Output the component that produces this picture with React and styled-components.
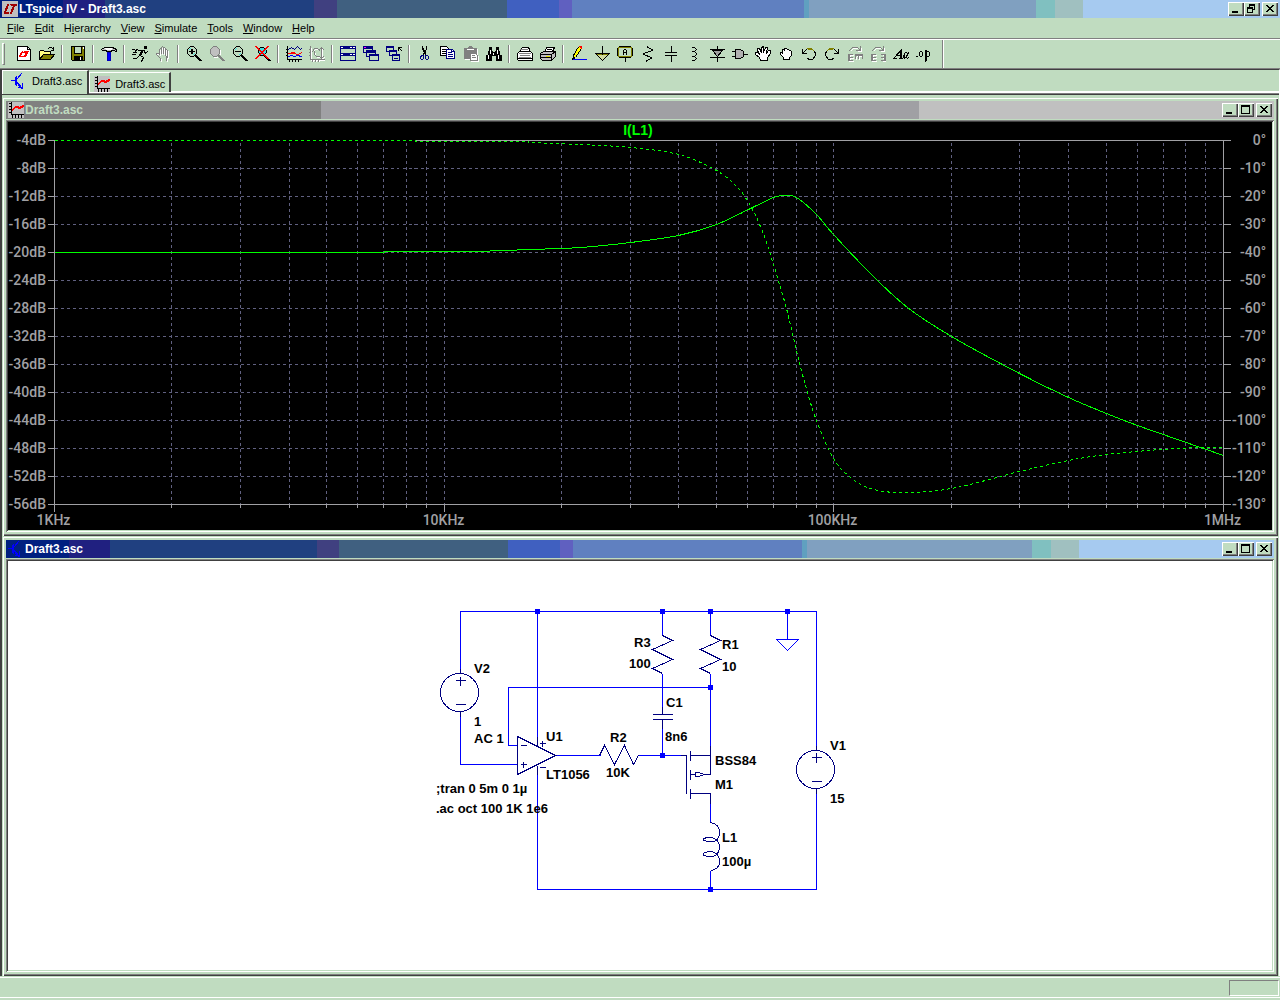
import React from "react";
import styled, { createGlobalStyle } from "styled-components";

const Face = "#c0dcc0";
const Light = "#ffffff";
const Shadow = "#808080";
const Dark = "#404040";
const Navy = "#000080";
const Wire = "#0000ff";
const AxisColor = "#a0a0a4";
const GridColor = "#606080";
const TraceColor = "#00ff00";

const ActiveCaption = `linear-gradient(to right,
  #002080 4.95%, #202080 4.95% 8.24%, #204080 8.24% 24.5%, #404080 24.5% 26.3%,
  #406080 26.3% 39.6%, #4060c0 39.6% 43.7%, #6060c0 43.7% 44.7%, #6080c0 44.7% 62.8%,
  #60a0c0 62.8% 63.2%, #80a0c0 63.2% 80.9%, #80c0c0 80.9% 82.4%, #a0c0c0 82.4% 84.6%,
  #a6caf0 84.6%)`;
const InactiveCaption = `linear-gradient(to right,
  #808080 24.85%, #a0a0a4 24.85% 72%, #c0c0c0 72%)`;

const GlobalStyle = createGlobalStyle`
  * {
    box-sizing:border-box;
  }
  body {
    margin:0;
    background:${Face};
    font-family:"Liberation Sans",Arial,sans-serif;
    font-size:11px;
    color:#000000;
  }
  button {
    font:inherit;
    color:inherit;
    margin:0;
    padding:0;
    border:none;
    background:none;
  }
  svg {
    display:block;
  }
`;

const AppContainer = styled.div`
  min-height:100vh;
  display:flex;
  flex-direction:column;
`;

const TitleBar = styled.header`
  display:flex;
  align-items:center;
  height:18px;
  flex:none;
  padding:0 2px;
  color:${props=>props.$inactive?Face:Light};
  background:${props=>props.$inactive?InactiveCaption:ActiveCaption};
`;

const TitleText = styled.h1`
  flex:1;
  margin:0 0 0 1px;
  font-size:12px;
  line-height:18px;
  font-weight:bold;
`;

const CaptionButtons = styled.div`
  display:flex;
  & > button:last-child {
    margin-left:2px;
  }
`;

const CaptionButton = styled.button`
  width:16px;
  height:14px;
  background:${Face};
  box-shadow:inset 1px 1px ${Light},inset -1px -1px ${Dark},inset -2px -2px ${Shadow};
`;

const MenuBar = styled.nav`
  display:flex;
  height:21px;
  padding-left:2px;
  border-bottom:1px solid ${Shadow};
`;

const MenuButton = styled.button`
  padding:0 5px;
  line-height:20px;
`;

const ToolBar = styled.div`
  display:flex;
  align-items:center;
  height:30px;
  border-top:1px solid ${Light};
  border-bottom:1px solid ${Shadow};
`;

const Grip = styled.div`
  width:3px;
  height:22px;
  margin:0 7px 0 2px;
  border:1px solid ${Light};
  border-right-color:${Shadow};
  border-bottom-color:${Shadow};
`;

const ToolButton = styled.button`
  width:23px;
  height:22px;
  padding-left:4px;
`;

const Separator = styled.div`
  width:2px;
  height:18px;
  margin:0 3px;
  border-left:1px solid ${Shadow};
  border-right:1px solid ${Light};
`;

const BarEnd = styled.div`
  width:2px;
  align-self:stretch;
  margin-left:7px;
  border-left:1px solid ${Shadow};
  border-right:1px solid ${Light};
`;

const Workspace = styled.main`
  flex:1;
  display:flex;
  flex-direction:column;
  border-top:1px solid ${Dark};
  border-left:2px solid ${Dark};
  border-right:1px solid ${Light};
`;

const TabStrip = styled.div`
  display:flex;
  align-items:flex-end;
  height:25px;
  margin-bottom:2px;
  border-bottom:1px solid ${Dark};
  box-shadow:inset 0 -1px ${Shadow},inset 0 -3px ${Light};
`;

const Tab = styled.button`
  display:flex;
  align-items:center;
  gap:5px;
  height:${props=>props.$active?'24px':'20px'};
  margin-bottom:${props=>props.$active?'0':'2px'};
  padding:${props=>props.$active?'0 5px 3px 8px':'2px 4px 0 4px'};
  background:${Face};
  border-top:1px solid ${Light};
  border-left:1px solid ${Light};
  border-right:2px solid ${Dark};
`;

const ChildWindow = styled.section`
  display:flex;
  flex-direction:column;
  flex:${props=>props.$grow?'1':'none'};
  margin-right:1px;
  padding:4px;
  background:${Face};
  box-shadow:inset 1px 1px ${Face},inset 2px 2px ${Light},inset -1px -1px ${Dark},inset -2px -2px ${Shadow};
`;

const Client = styled.div`
  flex:1;
  margin-top:1px;
  padding:2px;
  background:${props=>props.$background};
  box-shadow:inset 1px 1px ${Shadow},inset -1px -1px ${Light},inset 2px 2px ${Dark},inset -2px -2px ${Face};
`;

const Drawing = styled.svg`
  width:100%;
  height:auto;
  shape-rendering:crispEdges;
`;

const AxisText = styled.text`
  font-family:Roboto,"Liberation Sans",sans-serif;
  font-size:14px;
  font-weight:500;
  fill:${AxisColor};
  text-anchor:${props=>props.$anchor?props.$anchor:'end'};
`;

const TraceText = styled.text`
  font-size:14px;
  font-weight:bold;
  fill:${TraceColor};
  text-anchor:middle;
`;

const PartText = styled.text`
  font-size:13px;
  font-weight:bold;
  fill:#000000;
`;

const StatusBar = styled.footer`
  display:flex;
  justify-content:flex-end;
  height:21px;
  margin:1px 0 2px;
  padding:2px 1px 0 0;
  border-top:1px solid ${Light};
  border-bottom:1px solid ${Light};
`;

const StatusPanel = styled.div`
  width:50px;
  height:16px;
  border:1px solid ${Shadow};
  border-right-color:${Light};
  border-bottom-color:${Light};
`;

// every icon is a list of [stroke, fill, path] on a 16 x 16 grid
const K = "#000000";
const N = "none";
const W = "#ffffff";
const R = "#ff0000";
const G = "#808080";
const O = "#808000";
const T = "#40e0e0";
const lens = "M4 0H7L10 3V7L7 10H4L1 7V3Z";
const lensHandle = "M9 9L14 14M10 9L15 14M9 10L13 14";
const handShape = "M5 14V12L1 8V7H3L4 8V3L5 2L6 3V7M6 3V1L7 0L8 1V7M8 2L9 1L10 2V7M10 4L11 3L12 4V10L11 12V14Z";
const plotAxes = "M3 0V12H15M1 1H3M1 4H3M1 7H3M1 10H3M4 12V15M7 12V15M10 12V15M13 12V15";

const Icons = {
  logo:[["#c0c0c0","#c0c0c0","M0 0H15V15H0Z"],["#a00000",N,"M5 3L2 11H6M6 3L3 11M6 12H2M8 3H14M9 4H14M12 4L9 12M11 4L8 12"]],
  newFile:[[K,W,"M1 0H11L14 3V14H1Z"],[K,N,"M11 0V3H14"],[R,N,"M6 5L4 10H7M5 6L3 10M7 6L9 5H12M8 6H11M11 6L9 10M10 6L8 10"]],
  open:[[K,"#ffff80","M0 13V5L1 4H4L5 5H11V8H4L0 13"],[K,O,"M0 13L4 8H15L11 13Z"],[K,N,"M9 2L10 1H12L14 3M14 1V4H12"]],
  save:[[K,O,"M1 0H14V14H2L1 13Z"],[K,Face,"M4 0H11V7H4Z"],[K,K,"M4 10H12V14H4Z"],[W,N,"M10 11V13M13 1V2"]],
  hammer:[[K,"#c0c0c0","M0 3L3 1H11L15 3V5L12 4H10V5H5V4H1Z"],[W,W,"M4 2H10V3H5Z"],["#0000c0",Wire,"M6 6H9V14H6Z"]],
  run:[[K,K,"M12 0H14V2H12Z"],[K,N,"M4 3L7 4H12M10 4L7 9M11 4L8 9M9 5L7 8M12 5L13 7L15 5M8 9L11 11L9 15M7 9L4 12L1 12M4 3L3 5M0 3H2M1 6H4M0 8H3"]],
  halt:[[G,N,handShape]],
  zoomIn:[[K,N,lens],[T,N,"M4 2L3 3M7 8L8 7"],[K,N,"M3 5H8M5 3V7M6 3V7"],[K,N,lensHandle]],
  zoomBack:[[G,"#c0c0c0",lens],[G,N,lensHandle]],
  zoomOut:[[K,N,lens],[T,N,"M4 2L3 3M7 8L8 7"],[K,N,"M3 5H8"],[K,N,lensHandle]],
  zoomFit:[[K,T,"M5 1H8L11 4V6L8 9H5L3 6V4Z"],[K,N,lensHandle],[R,N,"M0 0L12 12M1 0L13 12M12 0L0 12M13 0L1 12"]],
  autorange:[[Navy,N,"M2 3L5 1L8 3L11 0L14 3L15 2"],[R,N,"M2 7H4L6 6H8L10 8H12L15 6M6 7H8"],[Wire,N,"M2 10L5 9L8 10L11 9L15 10"],[K,N,"M1 0V13H15M0 3H1M0 6H1M0 9H1M3 13V15M6 13V15M9 13V15M12 13V15"]],
  marker:[[G,N,"M1 0V13H15M0 3H1M0 6H1M0 9H1M3 13V15M6 13V15M9 13V15M3 5L5 2H8L10 4M5 5V8L7 10H10M12 1V12M10 3L12 1L14 3M10 10L12 12L14 10"]],
  tile:[[Navy,Face,"M0 0H15V7H0ZM0 7H15V14H0Z"],[Navy,N,"M0 1H15M0 2H15M0 8H15M0 9H15"],[W,N,"M1 1H2M10 1H11M13 1H14M1 8H2M10 8H11M13 8H14"]],
  cascade:[[Navy,Face,"M0 0H9V6H0Z"],[Navy,N,"M0 1H9M0 2H9"],[Navy,Face,"M3 4H12V10H3Z"],[Navy,N,"M3 5H12M3 6H12"],[Navy,Face,"M6 8H15V14H6Z"],[Navy,N,"M6 9H15"],["#ff00ff",N,"M1 1H2"]],
  closeAll:[[Navy,Face,"M0 0H7V5H0Z"],[Navy,N,"M0 1H7"],[Navy,Face,"M3 4H10V9H3Z"],[Navy,N,"M3 5H10"],[Navy,Face,"M6 8H13V14H6Z"],[Navy,N,"M6 9H13M8 12H11"],[K,N,"M15 4L12 1M12 4V1H15"]],
  cut:[[K,N,"M5 0V3L8 8M6 2L8 7M9 0V3L6 8"],[Navy,N,"M5 9H6V12L5 13H4L3 12V10ZM9 9H10L11 10V12L10 13H9L8 12V9Z"]],
  copy:[[K,W,"M0 0H6L8 2V9H0Z"],[K,N,"M2 3H5M2 5H6M2 7H6"],[Navy,W,"M6 3H12L14 5V12H6Z"],[Navy,N,"M8 6H11M8 8H12M8 10H12M11 3V5H14"]],
  paste:[[G,G,"M1 2H4L6 0H8L10 2H13V12H1Z"],[G,W,"M7 7H12L14 9V14H7Z"],[G,N,"M9 9H11M9 11H12"],[W,N,"M4 3H10"]],
  find:[[K,K,"M3 1H5V4H3ZM10 1H12V4H10ZM2 5H6V9H2ZM9 5H13V9H9ZM0 9H5V14H0ZM10 9H15V14H10ZM6 6H9V9H6Z"],[W,N,"M4 4V7M11 4V7M2 9V12M12 9V12M7 7V8"]],
  setup:[[K,W,"M3 6V3L5 1H11L12 3V6"],[K,W,"M2 5H13L15 7V14H1L0 13V7Z"],[G,N,"M3 3H10M2 7H13M3 9H12M2 11H13"],[K,N,"M0 12H15"]],
  print:[[K,W,"M4 6L6 1H14L12 5"],[K,"#c0c0c0","M0 7L3 5H14L15 6V10L11 14H2L0 12Z"],[K,N,"M0 8H11V13M0 11H11M11 8L15 5M7 3H11"],["#e0e000",N,"M6 10H9"]],
  pencil:[[K,"#ffff00","M6 2L8 0L10 2L4 11L2 12V9Z"],[R,N,"M8 0L9 1M9 0H10V2"],[K,N,"M2 10L1 13H4"],[Wire,N,"M2 13H15"]],
  ground:[[O,"#d0dca0","M2 8H14L8 14Z"],[K,N,"M8 0V8M1 7H15M2 8L8 14L14 8"]],
  label:[[O,Face,"M1 1H14V10H1Z"],[K,N,"M2 0H13M15 2V9M13 11H2M0 9V2M6 8V4L7 3H8L9 4V8M6 6H9M8 11V15"]],
  resistor:[[K,N,"M7 0V1L12 3V4L3 7V8L11 11V12L6 14V15"]],
  capacitor:[[K,N,"M8 0V6M2 6H13M2 9H13M8 9V15"]],
  inductor:[[K,N,"M6 1H8L10 3L8 5H6M8 5L10 7V8L8 10H6M8 10L10 12L8 14H6"]],
  diode:[[K,"#a0a0a0","M3 4H13L8 10Z"],[K,N,"M8 0V4M1 3H15M1 11H15M8 11V15"]],
  gate:[[K,"#b0b0b0","M3 3H8L11 5V10L8 12H3Z"],[K,N,"M0 5H3M0 10H3M11 8H15"]],
  move:[[K,W,"M5 14L4 11L0 8V6H2L4 8L2 4V2H4L6 6V2L7 0H8V6L10 1H12L11 7L13 4H15V7L12 11V14Z"]],
  drag:[[K,W,"M5 13V11L2 8V6H3L4 7V3H5L6 4V2H8L9 3H10L11 4H12L13 5V9L11 11V13Z"]],
  undo:[[O,N,"M3 5L6 2H10L13 5M7 3H10"],[K,N,"M1 3V7H5M2 6L5 3M13 5L14 7V9L11 13H8L6 12"]],
  redo:[[O,N,"M12 5L9 2H5L2 5M5 3H8"],[K,N,"M14 3V7H10M13 6L10 3M2 5L1 7V9L4 13H7L9 12"]],
  rotate:[[G,N,"M2 4L5 1H10L12 3M13 0V4H9M1 8V14M2 8V14M1 8H5M1 11H5M1 14H5M8 8H15M8 9H15M8 9V12M11 9V12M15 9V12"]],
  mirror:[[G,N,"M2 4L5 1H10L12 3M13 0V4H9M1 8V14M2 8V14M1 8H5M1 11H5M1 14H5M15 8V14M14 8V14M15 8H11M15 11H11M15 14H11"]],
  text:[[K,N,"M0 12H3M1 11L8 3V12M7 4V12M4 9H8M6 12H9M15 7L12 6L10 9V11L11 12L13 10L15 6L13 11L14 12L15 11M11 7V11"]],
  directive:[[K,N,"M0 10H1M3 6L4 5H5L6 6V9L5 10H4L3 9ZM9 4V15M10 4V14M10 5H12L13 6V9L12 10H10"]],
  transistor:[[Wire,N,"M0 7H5M4 4V11M5 3V12M6 5L10 0M5 9L10 15M6 9L11 15M7 14H11V10"]],
  plot:[["#c0c0c0","#c0c0c0","M0 0H15V15H0Z"],[K,N,plotAxes],[R,N,"M4 8L7 5H9L11 6L15 4M4 7L7 4H9L11 5L15 3"]],
  minimize:[[K,N,"M4 10H9M4 9H9"]],
  maximize:[[K,N,"M3 2H11V10H3ZM3 3H11"]],
  restore:[[K,N,"M5 2H10V7H8M5 3H10M5 2V4M3 5H8V10H3ZM3 6H8"]],
  close:[[K,N,"M4 3L10 9M5 3L11 9M10 3L4 9M11 3L5 9"]],
};

function Glyph ({ name, ghost }) {
  return (
    <svg width="16" height="16" viewBox="0 0 16 16" shapeRendering="crispEdges" aria-hidden="true">
      {ghost && (
        <g transform="translate(1.5 1.5)">
          {Icons[name].map(([,,d],i)=><path key={i} d={d} stroke={W} fill="none"/>)}
        </g>
      )}
      <g transform="translate(.5 .5)" strokeLinecap="square">
        {Icons[name].map(([stroke,fill,d],i)=><path key={i} d={d} stroke={stroke} fill={fill}/>)}
      </g>
    </svg>
  );
}

const menus = [
  ["","F","ile"],["","E","dit"],["H","i","erarchy"],["","V","iew"],
  ["","S","imulate"],["","T","ools"],["","W","indow"],["","H","elp"],
];

const toolGroups = [
  ["newFile","open"],
  ["save"],
  ["hammer"],
  ["run","halt"],
  ["zoomIn","zoomBack","zoomOut","zoomFit"],
  ["autorange","marker"],
  ["tile","cascade","closeAll"],
  ["cut","copy","paste","find"],
  ["setup","print"],
  ["pencil","ground","label","resistor","capacitor","inductor","diode","gate","move","drag","undo","redo","rotate","mirror","text","directive"],
];
const disabledTools = ["halt","zoomBack","marker","paste","rotate","mirror"];

function WindowButtons ({ middle }) {
  return (
    <CaptionButtons>
      {["minimize",middle,"close"].map(name=>(
        <CaptionButton key={name} aria-label={name}><Glyph name={name}/></CaptionButton>
      ))}
    </CaptionButtons>
  );
}

// plot frame, in drawing units
const plot = { left:54.5, right:1223.5, top:140.5, bottom:504.5, step:28 };
const freqX = f => Math.round(plot.left + Math.log10(f) * (plot.right-plot.left)/3 - .5) + .5;

const decades = [1,10,100];
const minorFreqs = decades.flatMap(d=>[2,3,4,5,6,7,8,9].map(n=>n*d));
const rows = Array.from({length:14},(_,i)=>i);

const magnitude = [
  [476,251],[530,249],[580,247],[630,242],[678,235],[716,224],[750,208],[773,197],[784,195],[796,197],
  [816,214],[833,234],[872,275],[907,307],[951,336],[1019,373],[1068,397],[1106,413],[1137,425],[1180,440],[1223,455],
];
const phase = [
  [528,142],[580,144],[630,147],[678,154],[716,170],[738,188],[752,209],[762,231],[767,245],[776,274],[786,308],
  [796,350],[805,385],[816,420],[833,458],[850,477],[870,488],[900,492],[951,488],[1019,471],[1068,460],
  [1106,454],[1160,449],[1200,447],[1223,447],
];

// Catmull-Rom through the points
function smooth (points) {
  let d = "";
  for (let i=0;i<points.length-1;i++) {
    const a = points[i-1]||points[i];
    const b = points[i];
    const c = points[i+1];
    const e = points[i+2]||c;
    d += `C${b[0]+(c[0]-a[0])/6} ${b[1]+(c[1]-a[1])/6} ${c[0]-(e[0]-b[0])/6} ${c[1]-(e[1]-b[1])/6} ${c[0]} ${c[1]}`;
  }
  return d;
}

function BodePlot () {
  const { left, right, top, bottom, step } = plot;
  const gridLines = rows.slice(1,13).map(i=>`M${left} ${top+i*step}H${right}`).join("")
    + [...minorFreqs,10,100].map(f=>`M${freqX(f)} ${top+2}V${bottom}`).join("");
  const ticks = rows.map(i=>`M${left-7} ${top+i*step}H${left}M${right} ${top+i*step}H${right+7}`).join("")
    + minorFreqs.map(f=>`M${freqX(f)} ${bottom}v3`).join("")
    + [1,10,100,1000].map(f=>`M${freqX(f)} ${bottom}v7`).join("");
  return (
    <Drawing viewBox="8 122 1264 408" role="img" aria-label="I(L1)">
      <path d={gridLines} stroke={GridColor} strokeDasharray="3 3" fill="none"/>
      <path d={`M${left} ${top}H${right}V${bottom}H${left}Z`} stroke={AxisColor} fill="none"/>
      <path d={ticks} stroke={AxisColor} fill="none"/>
      <path d={`M${left+1} ${top}H415`} stroke="#000000"/>
      <g transform="translate(.5 .5)" stroke={TraceColor} fill="none">
        <path d={`M54 252H384V251H476${smooth(magnitude)}`}/>
        <path d={`M54 140H415V141H528V142${smooth(phase)}`} strokeDasharray="3 3"/>
      </g>
      <TraceText x="638" y="135">I(L1)</TraceText>
      {rows.map(i=>(
        <React.Fragment key={i}>
          <AxisText x="46" y={145+i*step}>{-4-i*4}dB</AxisText>
          <AxisText x="1266" y={145+i*step}>{-10*i||0}°</AxisText>
        </React.Fragment>
      ))}
      {[[1,"1KHz"],[10,"10KHz"],[100,"100KHz"],[1000,"1MHz"]].map(([f,label])=>(
        <AxisText key={label} $anchor="middle" x={freqX(f)-1} y="525">{label}</AxisText>
      ))}
    </Drawing>
  );
}

const wires = "M460 673V611H816V750M816 788V889H537V774M537 611V736M460 711V764H517M517 745H508V687H710M555 755H600M638 755H680M662 611V635M662 673V706M662 728V755M710 611V635M710 673V745M710 803V822M710 870V889M787 611V639";
const parts = "M460 711V716M460 668V673M816 745V750M816 788V793M517 736V774L555 755ZM537 736V746M537 765V774"
  + "M520 745H526M520 764H526M523 761V767M539 743H545M542 740V746M539 767H545"
  + "M599 755L604 745L614 764L624 745L633 764L638 755"
  + "M662 635L672 640L652 649L672 659L652 668L662 673M710 635L720 640L700 649L720 659L700 668L710 673"
  + "M662 706V714M652 714H672M652 719H672M662 719V728"
  + "M680 755H686V793M690 750V760M690 769V779M690 788V798M690 755H710M710 745V774H703M690 774H695M695 772H698L704 774L698 776H695ZM690 793H710V803"
  + "M710 822C716 823 719 827 719 832C719 839 715 841 711 841C706 841 703 840 703 839C703 837 706 837 711 837C716 838 719 842 719 846C719 853 715 856 711 856C706 856 703 855 703 854C703 852 706 851 711 851C716 852 719 856 719 862C719 867 714 870 710 870"
  + "M455 680H465M460 676V685M455 704H465M811 757H821M816 752V762M811 781H821";
const joints = [[537,611],[662,611],[710,611],[787,611],[710,687],[662,755],[710,889]];
const labels = [
  ["V2",474,673],["1",474,726],["AC 1",474,743],["U1",546,741],["LT1056",546,779],["R2",610,742],["10K",606,777],
  [";tran 0 5m 0 1µ",436,793],[".ac oct 100 1K 1e6",436,813],["R3",634,647],["100",629,668],["R1",722,649],
  ["10",722,671],["C1",666,707],["8n6",665,741],["BSS84",715,765],["M1",715,789],["L1",722,842],["100µ",722,866],
  ["V1",830,750],["15",830,803],
];

function Schematic () {
  return (
    <Drawing viewBox="8 561 1264 408" role="img" aria-label="Draft3 schematic">
      <g transform="translate(.5 .5)" fill="none">
        <path d={wires} stroke={Wire}/>
        <path d={parts} stroke={Navy}/>
        <path d="M776 639H798L787 650Z" stroke={Wire}/>
        <circle cx="459" cy="692" r="19" stroke={Navy}/>
        <circle cx="815" cy="769" r="19" stroke={Navy}/>
      </g>
      {joints.map(([x,y])=>(
        <rect key={`${x}-${y}`} x={x-2} y={y-2} width="5" height="5" fill={Wire}/>
      ))}
      {labels.map(([text,x,y])=>(
        <PartText key={text+x} x={x} y={y}>{text}</PartText>
      ))}
    </Drawing>
  );
}

export default function App () {
  return (
    <AppContainer>
      <GlobalStyle/>
      <TitleBar>
        <Glyph name="logo"/>
        <TitleText>LTspice IV - Draft3.asc</TitleText>
        <WindowButtons middle="restore"/>
      </TitleBar>
      <MenuBar>
        {menus.map(([before,key,after])=>(
          <MenuButton key={key+after}>{before}<u>{key}</u>{after}</MenuButton>
        ))}
      </MenuBar>
      <ToolBar role="toolbar">
        <Grip/>
        {toolGroups.map((group,i)=>(
          <React.Fragment key={i}>
            {i>0 && <Separator/>}
            {group.map(name=>(
              <ToolButton key={name} aria-label={name} disabled={disabledTools.includes(name)}>
                <Glyph name={name} ghost={disabledTools.includes(name)}/>
              </ToolButton>
            ))}
          </React.Fragment>
        ))}
        <BarEnd/>
      </ToolBar>
      <Workspace>
        <TabStrip role="tablist">
          <Tab role="tab" aria-selected="true" $active><Glyph name="transistor"/>Draft3.asc</Tab>
          <Tab role="tab" aria-selected="false"><Glyph name="plot"/>Draft3.asc</Tab>
        </TabStrip>
        <ChildWindow>
          <TitleBar $inactive>
            <Glyph name="plot"/>
            <TitleText as="h2">Draft3.asc</TitleText>
            <WindowButtons middle="maximize"/>
          </TitleBar>
          <Client $background="#000000"><BodePlot/></Client>
        </ChildWindow>
        <ChildWindow $grow>
          <TitleBar>
            <Glyph name="transistor"/>
            <TitleText as="h2">Draft3.asc</TitleText>
            <WindowButtons middle="maximize"/>
          </TitleBar>
          <Client $background="#ffffff"><Schematic/></Client>
        </ChildWindow>
      </Workspace>
      <StatusBar><StatusPanel/></StatusBar>
    </AppContainer>
  );
}
